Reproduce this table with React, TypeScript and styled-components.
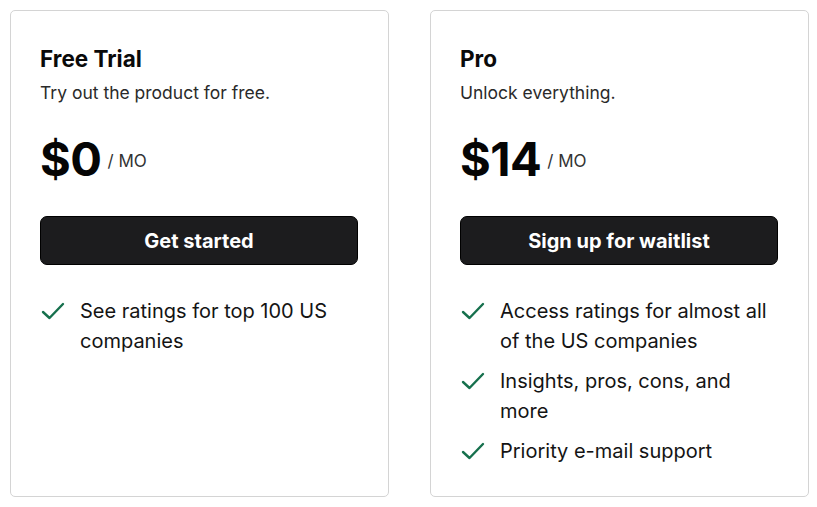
import React from "react";
import styled, { createGlobalStyle } from "styled-components";

const Global = createGlobalStyle`
  * { box-sizing: border-box; }
  html, body { margin: 0; padding: 0; background: #ffffff; }
  body { font-family: Inter, "Noto Sans", "Liberation Sans", sans-serif; color: #111111; }
`;

const Page = styled.div`
  display: grid;
  grid-template-columns: 1fr 1fr;
  gap: 41px;
  height: 507px;
  padding: 10px 8px 10px 10px;
`;

const Card = styled.section`
  display: flex;
  flex-direction: column;
  border: 1px solid #d4d4d4;
  border-radius: 5px;
  padding: 34px 30px 20px 29px;
  background: #ffffff;
`;

const Title = styled.h2`
  margin: 0;
  font-size: 22.5px;
  line-height: 28px;
  font-weight: 700;
  color: #0a0a0a;
`;

const Subtitle = styled.p`
  margin: 8px 0 0 0;
  font-size: 17.5px;
  line-height: 24px;
  color: #2a2a2a;
`;

const PriceRow = styled.div`
  display: flex;
  align-items: center;
  gap: 6px;
  margin-top: 26px;
`;

const Amount = styled.span`
  font-size: 47px;
  line-height: 56px;
  font-weight: 700;
  color: #050505;
  letter-spacing: -0.5px;
`;

const Per = styled.span`
  font-size: 17px;
  color: #333333;
  padding-top: 4px;
`;

const Button = styled.button`
  margin-top: 29px;
  height: 49px;
  width: 100%;
  border: 1px solid #000000;
  border-radius: 7px;
  background: #1c1c1e;
  color: #ffffff;
  font-family: inherit;
  font-size: 20px;
  font-weight: 700;
  cursor: pointer;
`;

const Features = styled.ul`
  list-style: none;
  margin: 31px 0 0 0;
  padding: 0;
  display: flex;
  flex-direction: column;
  gap: 10px;
`;

const Feature = styled.li`
  display: flex;
  align-items: flex-start;
  gap: 14px;
  font-size: 20px;
  line-height: 30px;
  color: #141414;
`;

const CheckWrap = styled.span`
  flex: 0 0 auto;
  display: flex;
  align-items: center;
  justify-content: center;
  width: 26px;
  height: 30px;
`;

const Check = () => (
  <CheckWrap>
    <svg width="24" height="18" viewBox="0 0 24 18" fill="none">
      <path
        d="M2 10 L8.5 16 L22 2"
        stroke="#16704d"
        strokeWidth="2.4"
        strokeLinecap="round"
        strokeLinejoin="round"
      />
    </svg>
  </CheckWrap>
);

type Plan = {
  name: string;
  tagline: string;
  price: string;
  cta: string;
  features: string[];
};

const plans: Plan[] = [
  {
    name: "Free Trial",
    tagline: "Try out the product for free.",
    price: "$0",
    cta: "Get started",
    features: ["See ratings for top 100 US companies"],
  },
  {
    name: "Pro",
    tagline: "Unlock everything.",
    price: "$14",
    cta: "Sign up for waitlist",
    features: [
      "Access ratings for almost all of the US companies",
      "Insights, pros, cons, and more",
      "Priority e-mail support",
    ],
  },
];

export default function App() {
  return (
    <>
      <Global />
      <Page>
        {plans.map((p) => (
          <Card key={p.name}>
            <Title>{p.name}</Title>
            <Subtitle>{p.tagline}</Subtitle>
            <PriceRow>
              <Amount>{p.price}</Amount>
              <Per>/ MO</Per>
            </PriceRow>
            <Button>{p.cta}</Button>
            <Features>
              {p.features.map((f) => (
                <Feature key={f}>
                  <Check />
                  <span>{f}</span>
                </Feature>
              ))}
            </Features>
          </Card>
        ))}
      </Page>
    </>
  );
}
